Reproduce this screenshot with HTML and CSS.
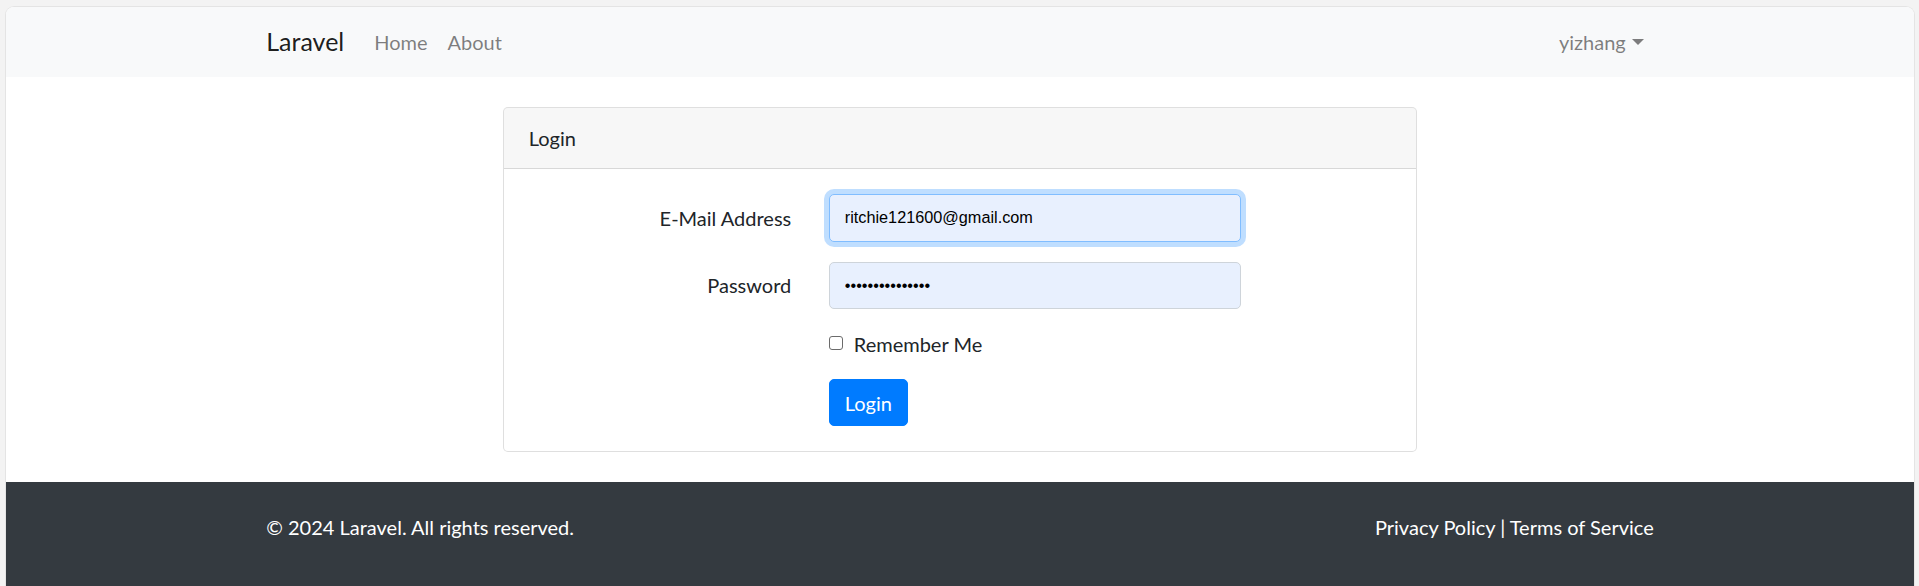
FILE: index.html
```html
<!DOCTYPE html>
<html lang="en">
<head>
<meta charset="utf-8">
<title>Login</title>
<link rel="stylesheet" href="styles.css">
</head>
<body>
<div class="window">
  <nav class="navbar">
    <div class="container nav-inner">
      <a class="brand" href="#">Laravel</a>
      <ul class="nav nav-left">
        <li><a class="nav-link" href="#">Home</a></li>
        <li><a class="nav-link" href="#">About</a></li>
      </ul>
      <ul class="nav nav-right">
        <li><a class="nav-link dropdown-toggle" href="#">yizhang</a></li>
      </ul>
    </div>
  </nav>

  <main class="main">
    <div class="container">
      <div class="card">
        <div class="card-header">Login</div>
        <div class="card-body">
          <form class="login-form">
            <div class="form-row">
              <label class="col-label" for="email">E-Mail Address</label>
              <div class="col-field">
                <input id="email" class="form-control is-focused" type="email" value="ritchie121600@gmail.com">
              </div>
            </div>
            <div class="form-row">
              <label class="col-label" for="password">Password</label>
              <div class="col-field">
                <input id="password" class="form-control" type="password" value="secretpassword1">
              </div>
            </div>
            <div class="form-row">
              <div class="col-field col-offset">
                <div class="form-check">
                  <input class="check-input" type="checkbox" id="remember">
                  <label class="check-label" for="remember">Remember Me</label>
                </div>
              </div>
            </div>
            <div class="form-row last">
              <div class="col-field col-offset">
                <button type="button" class="btn-primary">Login</button>
              </div>
            </div>
          </form>
        </div>
      </div>
    </div>
  </main>

  <footer class="footer">
    <div class="container footer-inner">
      <span class="copy">© 2024 Laravel. All rights reserved.</span>
      <span class="links"><a href="#">Privacy Policy</a> | <a href="#">Terms of Service</a></span>
    </div>
  </footer>
</div>
</body>
</html>
```

FILE: styles.css
```css
html, body {
  margin: 0;
  padding: 0;
  height: 100%;
  overflow: hidden;
}

body {
  background: #f3f3f3;
  padding: 6px 4px 0 5px;
  box-sizing: border-box;
  font-family: Lato, "Open Sans", sans-serif;
  font-size: 20px;
  line-height: 30px;
  color: #212529;
}

.window {
  background: #fff;
  border: 1px solid #e4e4e4;
  border-bottom: none;
  border-radius: 9px 9px 0 0;
  overflow: hidden;
  min-height: 700px;
}

.container {
  width: 1425px;
  box-sizing: border-box;
  padding: 0 18.75px;
  margin: 0 auto;
}

a {
  text-decoration: none;
}

/* Navbar */
.navbar {
  background: #f8f9fa;
  padding: 10px 20px;
}

.nav-inner {
  display: flex;
  align-items: center;
}

.brand {
  font-size: 25px;
  line-height: 37.5px;
  padding: 6.25px 0;
  margin-right: 20px;
  color: rgba(0, 0, 0, 0.9);
}

.nav {
  list-style: none;
  margin: 0;
  padding: 0;
  display: flex;
}

.nav-right {
  margin-left: auto;
}

.nav-link {
  display: block;
  padding: 10px;
  color: rgba(0, 0, 0, 0.5);
}

.dropdown-toggle::after {
  content: "";
  display: inline-block;
  margin-left: 6px;
  vertical-align: 5.1px;
  border-top: 6px solid;
  border-left: 6px solid transparent;
  border-right: 6px solid transparent;
  border-bottom: 0;
}

/* Main */
.main {
  padding: 30px 0;
}

.card {
  width: 912.5px;
  margin: 0 auto;
  border: 1px solid rgba(0, 0, 0, 0.125);
  border-radius: 5px;
  background: #fff;
}

.card-header {
  padding: 15px 25px;
  background: rgba(0, 0, 0, 0.03);
  border-bottom: 1px solid rgba(0, 0, 0, 0.125);
  border-radius: 4px 4px 0 0;
}

.card-body {
  padding: 25px;
}

.login-form {
  margin: 0;
}

.form-row {
  display: grid;
  grid-template-columns: 262.5px 412.5px;
  column-gap: 37.5px;
  margin-bottom: 20px;
}

.form-row.last {
  margin-bottom: 0;
}

.col-label {
  text-align: right;
  padding: 8.5px 0;
  line-height: 30px;
}

.col-offset {
  grid-column: 2;
}

.form-control {
  display: block;
  width: 100%;
  height: 47.5px;
  box-sizing: border-box;
  padding: 7.5px 15px;
  font-family: "Liberation Sans", Arial, sans-serif;
  font-size: 16.25px;
  color: #000;
  background: #e8f0fe;
  border: 1px solid #ced4da;
  border-radius: 5px;
  outline: none;
}

.form-control.is-focused {
  border-color: #80bdff;
  box-shadow: 0 0 0 5px rgba(0, 123, 255, 0.25);
}

.form-check {
  position: relative;
  padding-left: 25px;
}

.check-input {
  position: absolute;
  left: 0;
  top: 7px;
  margin: 0;
  appearance: none;
  -webkit-appearance: none;
  width: 14px;
  height: 14px;
  box-sizing: border-box;
  border: 1px solid #6b6b6b;
  border-radius: 3px;
  background: #fff;
}

.check-label {
  display: inline-block;
}

.btn-primary {
  display: inline-block;
  font-family: Lato, "Open Sans", sans-serif;
  font-size: 20px;
  line-height: 30px;
  padding: 7.5px 15px;
  color: #fff;
  background: #007bff;
  border: 1px solid #007bff;
  border-radius: 5px;
}

/* Footer */
.footer {
  background: #343a40;
  color: #fff;
  padding: 30px 0 80px;
}

.footer-inner {
  display: flex;
  justify-content: space-between;
}

.footer a {
  color: #fff;
}
```
